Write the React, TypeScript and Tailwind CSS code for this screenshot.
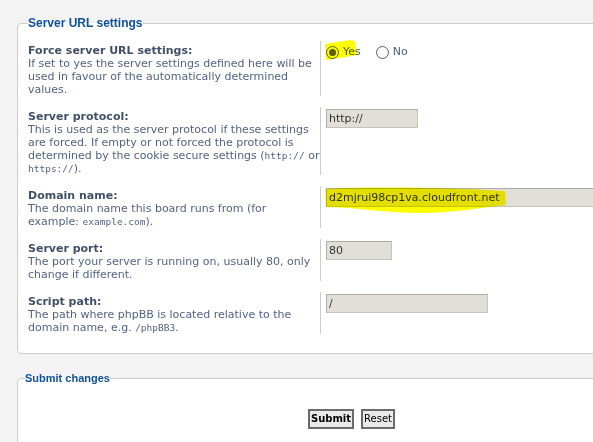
import React from "react";

type Row = {
  label: string;
  explain: React.ReactNode;
  field: React.ReactNode;
};

const Code = ({ children }: { children: React.ReactNode }) => (
  <code className="font-['DejaVu_Sans_Mono',monospace] text-[9.5px] leading-[10px]">{children}</code>
);

function TextBox({ value, width }: { value: string; width: string }) {
  return (
    <input
      type="text"
      defaultValue={value}
      className={`${width} h-[19px] border border-[#c6c3bb] border-t-[#aeaba4] border-l-[#b4b1aa] bg-[#e2dfd8] px-[2px] text-[11px] text-[#333] outline-none`}
    />
  );
}

function Radio({ checked, label }: { checked?: boolean; label: string }) {
  return (
    <label className="flex items-center gap-[4px] text-[#4f5f7c]">
      <span className="flex h-[13px] w-[13px] items-center justify-center rounded-full border border-[#5a5a5a] bg-white">
        {checked && <span className="h-[7px] w-[7px] rounded-full bg-[#5c5c5c]" />}
      </span>
      {label}
    </label>
  );
}

const ROWS: Row[] = [
  {
    label: "Force server URL settings:",
    explain:
      "If set to yes the server settings defined here will be used in favour of the automatically determined values.",
    field: (
      <div className="flex gap-[15px] pt-[1px] leading-[16px]">
        <Radio checked label="Yes" />
        <Radio label="No" />
      </div>
    ),
  },
  {
    label: "Server protocol:",
    explain: (
      <>
        This is used as the server protocol if these settings are forced. If empty or not forced the
        protocol is determined by the cookie secure settings (<Code>http://</Code> or{" "}
        <Code>https://</Code>).
      </>
    ),
    field: <TextBox value="http://" width="w-[92px]" />,
  },
  {
    label: "Domain name:",
    explain: (
      <>
        The domain name this board runs from (for example: <Code>example.com</Code>).
      </>
    ),
    field: <TextBox value="d2mjrui98cp1va.cloudfront.net" width="w-[300px]" />,
  },
  {
    label: "Server port:",
    explain: "The port your server is running on, usually 80, only change if different.",
    field: <TextBox value="80" width="w-[66px]" />,
  },
  {
    label: "Script path:",
    explain: (
      <>
        The path where phpBB is located relative to the domain name, e.g. <Code>/phpBB3</Code>.
      </>
    ),
    field: <TextBox value="/" width="w-[162px]" />,
  },
];

export default function App() {
  return (
    <div className="relative h-[442px] w-[593px] overflow-hidden bg-[#f3f3f3] font-['DejaVu_Sans',sans-serif] text-[11px]">
      <div className="w-[700px] pl-[17px] pt-[16px]">
        <fieldset className="w-[669px] rounded-[4px] border border-[#cccccc] bg-white px-[10px] pb-[8px] pt-[11px]">
          <legend className="font-['Liberation_Sans',Arial,sans-serif] text-[12px] font-bold leading-[14px] text-[#115098]">
            Server URL settings
          </legend>
          {ROWS.map((r) => (
            <dl key={r.label} className="mb-[11px] flex">
              <dt className="w-[292px] shrink-0 pt-[3px] leading-[13px]">
                <label className="block font-bold text-[#425067]">{r.label}</label>
                <span className="text-[#536482]">{r.explain}</span>
              </dt>
              <dd className="flex-1 border-l border-[#cccccc] pl-[5px] pt-[2px]">{r.field}</dd>
            </dl>
          ))}
        </fieldset>

        <fieldset className="mt-[18px] w-[669px] rounded-[4px] border border-[#cccccc] bg-white px-[7px] pb-[20px] pt-[24px]">
          <legend className="font-['Liberation_Sans',Arial,sans-serif] text-[11px] font-bold leading-[13px] text-[#115098]">
            Submit changes
          </legend>
          <div className="flex justify-center gap-[7px]">
            <button className="h-[20px] border-2 border-[#6a6a6a] bg-[#e9e9e9] px-[1px] text-[10px] font-bold leading-[14px] text-black">
              Submit
            </button>
            <button className="h-[20px] border-2 border-[#6a6a6a] bg-[#e9e9e9] px-[1px] text-[10px] leading-[14px] text-black">
              Reset
            </button>
          </div>
        </fieldset>
      </div>

      {/* marker highlights drawn over the form */}
      <svg
        className="pointer-events-none absolute left-0 top-0 mix-blend-multiply"
        width="593"
        height="442"
        viewBox="0 0 593 442"
      >
        <path d="M325 44 L350 40 Q356 40 356 46 L357 55 Q340 58 326 60 Z" fill="#ffff00" />
        <path
          d="M325 189 C380 186 450 188 505 191 L506 205 C480 208 450 213 420 213 C390 213 360 208 326 207 Z"
          fill="#ffff00"
        />
      </svg>
    </div>
  );
}
